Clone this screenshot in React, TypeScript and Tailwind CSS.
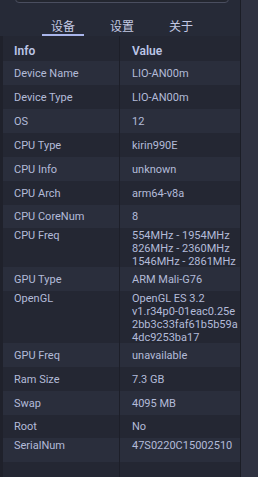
import React from "react";

type Row = { k: string; v: string[]; h: number; top?: boolean };

const rows: Row[] = [
  { k: "Device Name", v: ["LIO-AN00m"], h: 24 },
  { k: "Device Type", v: ["LIO-AN00m"], h: 24 },
  { k: "OS", v: ["12"], h: 24 },
  { k: "CPU Type", v: ["kirin990E"], h: 24 },
  { k: "CPU Info", v: ["unknown"], h: 24 },
  { k: "CPU Arch", v: ["arm64-v8a"], h: 24 },
  { k: "CPU CoreNum", v: ["8"], h: 23 },
  { k: "CPU Freq", v: ["554MHz - 1954MHz", "826MHz - 2360MHz", "1546MHz - 2861MHz"], h: 39, top: true },
  { k: "GPU Type", v: ["ARM Mali-G76"], h: 24 },
  { k: "OpenGL", v: ["OpenGL ES 3.2", "v1.r34p0-01eac0.25e", "2bb3c33faf61b5b59a", "4dc9253ba17"], h: 52, top: true },
  { k: "GPU Freq", v: ["unavailable"], h: 24 },
  { k: "Ram Size", v: ["7.3 GB"], h: 24 },
  { k: "Swap", v: ["4095 MB"], h: 24 },
  { k: "Root", v: ["No"], h: 23 },
  { k: "SerialNum", v: ["47S0220C15002510"], h: 24, top: true },
  { k: "", v: [""], h: 24 },
];

export default function App() {
  const font = { fontFamily: "Roboto, 'Noto Sans', sans-serif" };
  return (
    <div className="w-[258px] h-[477px] overflow-hidden flex bg-[#262a37]" style={font}>
      <div className="w-[240px] flex flex-col">
        <div className="h-[38px] relative flex items-start">
          <div className="absolute left-[15px] top-[-10px] w-[214px] h-[13px] rounded-b-[4px] border border-[#4a4e5f] bg-[#23262f]" />
          <div className="flex items-start pl-[42px] pt-[18px] gap-[17px] text-[12px] leading-[16px] text-[#c3c9e4]" style={{ fontFamily: "'Noto Sans CJK SC', sans-serif" }}>
            <div className="w-[42px] flex flex-col items-center">
              <span>设备</span>
              <div className="w-[42px] h-[2px] bg-[#a9b5ea]" />
            </div>
            <div className="w-[42px] flex justify-center"><span>设置</span></div>
            <div className="w-[42px] flex justify-center"><span>关于</span></div>
          </div>
        </div>
        <div className="h-px bg-[#1b1d26]" />
        <div className="flex-1 flex bg-[#1f212b]">
          <div className="ml-[3px] flex-1 flex flex-col text-[11px] text-[#b3bbd9]">
            <div className="h-[25px] shrink-0 flex bg-[#242733] font-semibold text-[#bcc5e6] text-[12px]">
              <div className="w-[117px] pl-[11px] pt-[4px] flex items-center border-r border-[#1d1f29]">Info</div>
              <div className="flex-1 pl-[12px] pt-[4px] flex items-center">Value</div>
            </div>
            {rows.map((r, i) => (
              <div
                key={i}
                className={`flex shrink-0 ${i % 2 === 0 ? "bg-[#2a2e3c]" : "bg-[#242733]"}`}
                style={{ height: r.h }}
              >
                <div className={`w-[117px] pl-[11px] flex border-r border-[#1d1f29] leading-[13px] ${r.top ? "items-start pt-px" : "items-center"}`}>
                  {r.k}
                </div>
                <div className={`flex-1 pl-[12px] flex flex-col leading-[13px] whitespace-nowrap ${r.top ? "justify-start pt-px" : "justify-center"}`}>
                  {r.v.map((t, j) => (
                    <span key={j}>{t}</span>
                  ))}
                </div>
              </div>
            ))}
          </div>
        </div>
      </div>
      <div className="w-px bg-[#1b1d26]" />
      <div className="flex-1 bg-[#2f3241]" />
    </div>
  );
}
